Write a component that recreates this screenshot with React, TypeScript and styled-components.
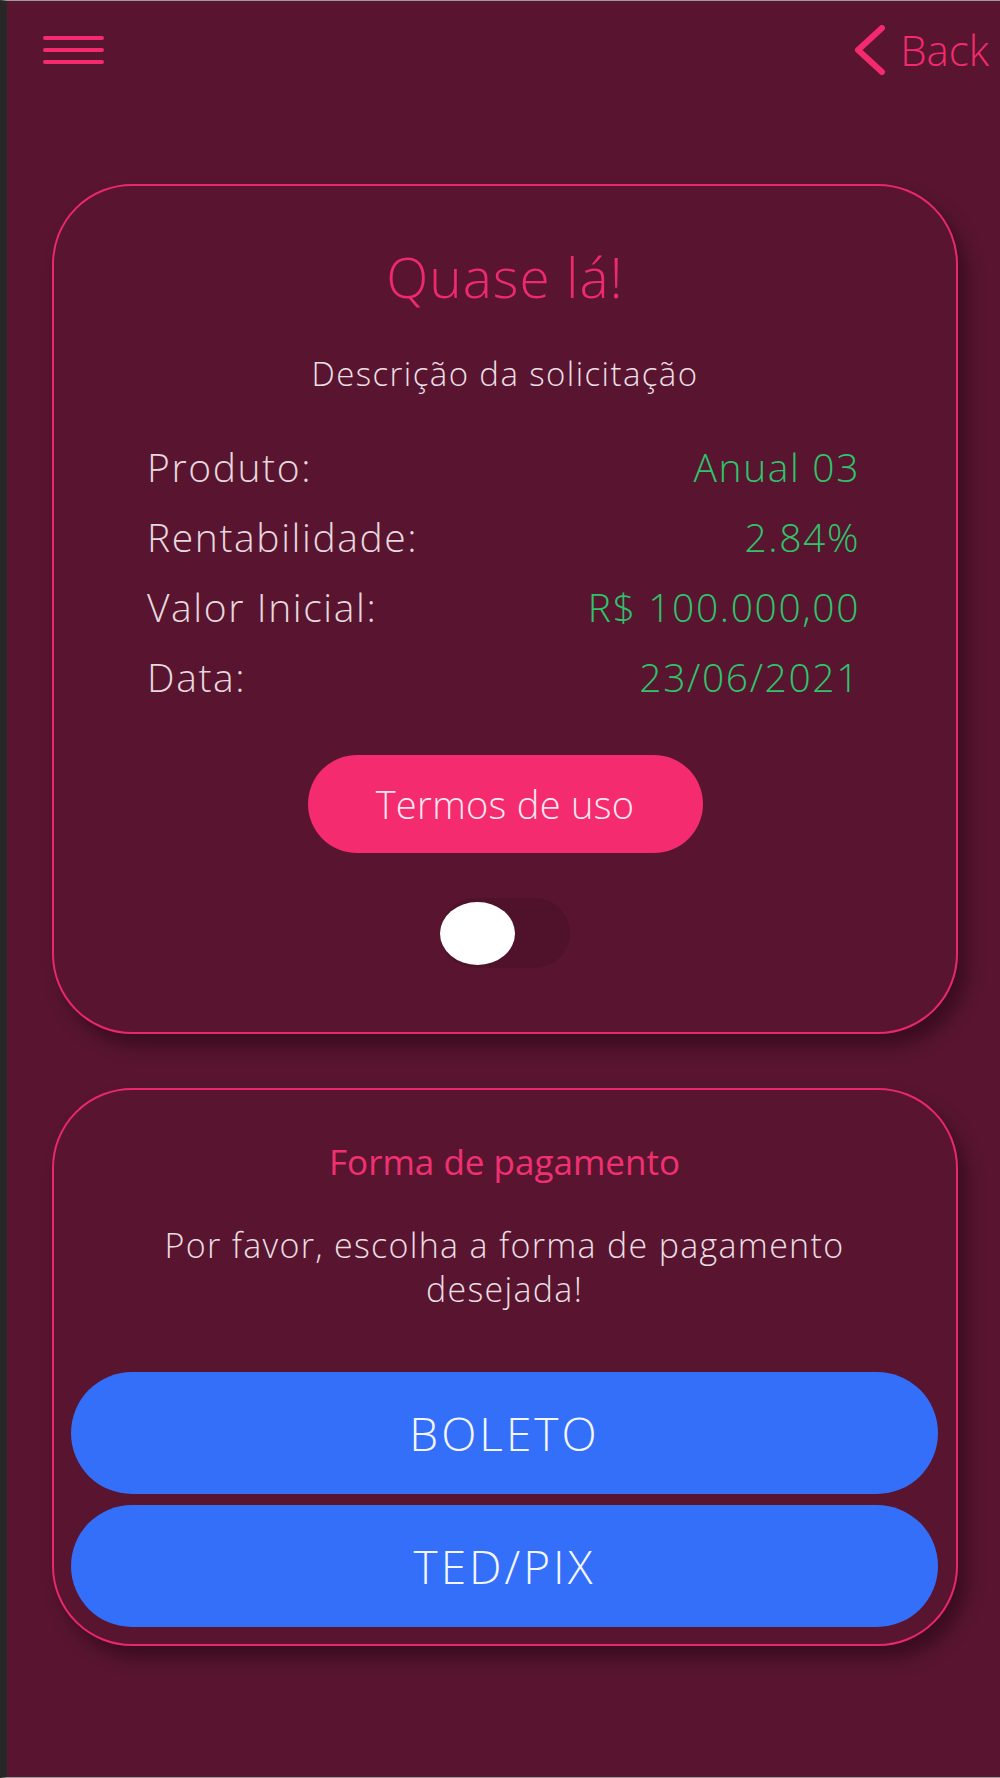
import React from "react";
import styled, { createGlobalStyle } from "styled-components";

const Global = createGlobalStyle`
  html, body { margin: 0; padding: 0; background: #591530; }
  * { box-sizing: border-box; }
`;

const Frame = styled.div`
  min-height: 1778px;
  background: #591530;
  border-left: 7px solid #272727;
  border-top: 1px solid #9c9c9c;
  border-bottom: 1px solid #9c9c9c;
  display: flex;
  flex-direction: column;
  font-family: "Open Sans", Lato, sans-serif;
`;

const Header = styled.header`
  height: 98px;
  display: flex;
  align-items: center;
  justify-content: space-between;
  padding: 0 11px 0 36px;
`;

const Burger = styled.div`
  width: 61px;
  display: flex;
  flex-direction: column;
  gap: 8px;
`;

const BurgerLine = styled.span`
  display: block;
  height: 4px;
  border-radius: 2px;
  background: #f42a6e;
`;

const BackLink = styled.div`
  display: flex;
  align-items: center;
  gap: 14px;
  color: #f42a6e;
  font-size: 42px;
  font-weight: 300;
  line-height: 1;
`;

const Card = styled.section<{ $gap?: number }>`
  margin: ${(p) => p.$gap ?? 0}px 42px 0 45px;
  border: 2px solid #e8286a;
  border-radius: 80px;
  box-shadow: 9px 12px 18px rgba(20, 0, 10, 0.45);
  display: flex;
  flex-direction: column;
  align-items: center;
`;

const SummaryCard = styled(Card)`
  padding: 66px 0 64px;
`;

const PaymentCard = styled(Card)`
  padding: 52px 18px 17px 17px;
`;

const Title = styled.h1`
  margin: 0;
  font-size: 55px;
  font-weight: 300;
  letter-spacing: 1px;
  line-height: 50px;
  color: #ee2a6c;
`;

const Subtitle = styled.p<{ $top: number }>`
  margin: ${(p) => p.$top}px 0 0;
  font-size: 33px;
  font-weight: 300;
  letter-spacing: 1.4px;
  line-height: 36px;
  color: #ebdfe4;
  text-align: center;
`;

const Rows = styled.div`
  margin-top: 39px;
  width: 100%;
  padding: 0 96px 0 93px;
  display: flex;
  flex-direction: column;
`;

const Row = styled.div`
  height: 70px;
  display: flex;
  align-items: center;
  justify-content: space-between;
  font-size: 39px;
  font-weight: 300;
  letter-spacing: 1.6px;
`;

const Label = styled.span`
  color: #e6d8de;
`;

const Value = styled.span`
  color: #2ec46b;
`;

const TermsButton = styled.button`
  margin-top: 44px;
  width: 395px;
  height: 98px;
  border: none;
  border-radius: 49px;
  background: #f42b6e;
  color: #fde6ee;
  font-family: inherit;
  font-size: 38px;
  font-weight: 300;
  letter-spacing: 0.3px;
  cursor: pointer;
`;

const Toggle = styled.div`
  margin-top: 45px;
  width: 130px;
  height: 70px;
  border-radius: 35px;
  background: rgba(40, 0, 15, 0.18);
  display: flex;
  align-items: center;
`;

const Knob = styled.span`
  width: 75px;
  height: 63px;
  border-radius: 50%;
  background: #ffffff;
`;

const SectionTitle = styled.h2`
  margin: 0;
  font-size: 35px;
  font-weight: 400;
  line-height: 40px;
  color: #f03070;
`;

const Body = styled.p`
  margin: 41px 0 0;
  width: 740px;
  font-size: 34px;
  font-weight: 300;
  letter-spacing: 1.3px;
  line-height: 44px;
  color: #e9dde2;
  text-align: center;
`;

const PayButton = styled.button<{ $top: number }>`
  margin-top: ${(p) => p.$top}px;
  width: 100%;
  height: 122px;
  border: none;
  border-radius: 61px;
  background: #336ff8;
  color: #f4f6ff;
  font-family: inherit;
  font-size: 46px;
  font-weight: 300;
  letter-spacing: 3px;
  cursor: pointer;
`;

const rows: [string, string][] = [
  ["Produto:", "Anual 03"],
  ["Rentabilidade:", "2.84%"],
  ["Valor Inicial:", "R$ 100.000,00"],
  ["Data:", "23/06/2021"],
];

export default function App() {
  return (
    <Frame>
      <Global />
      <Header>
        <Burger>
          <BurgerLine />
          <BurgerLine />
          <BurgerLine />
        </Burger>
        <BackLink>
          <svg width="32" height="50" viewBox="0 0 32 50">
            <polyline
              points="28,3 4,25 28,47"
              fill="none"
              stroke="#f42a6e"
              strokeWidth="6"
              strokeLinecap="round"
              strokeLinejoin="round"
            />
          </svg>
          <span>Back</span>
        </BackLink>
      </Header>

      <SummaryCard $gap={85}>
        <Title>Quase lá!</Title>
        <Subtitle $top={54}>Descrição da solicitação</Subtitle>
        <Rows>
          {rows.map(([l, v]) => (
            <Row key={l}>
              <Label>{l}</Label>
              <Value>{v}</Value>
            </Row>
          ))}
        </Rows>
        <TermsButton>Termos de uso</TermsButton>
        <Toggle>
          <Knob />
        </Toggle>
      </SummaryCard>

      <PaymentCard $gap={54}>
        <SectionTitle>Forma de pagamento</SectionTitle>
        <Body>Por favor, escolha a forma de pagamento desejada!</Body>
        <PayButton $top={61}>BOLETO</PayButton>
        <PayButton $top={11}>TED/PIX</PayButton>
      </PaymentCard>
    </Frame>
  );
}
